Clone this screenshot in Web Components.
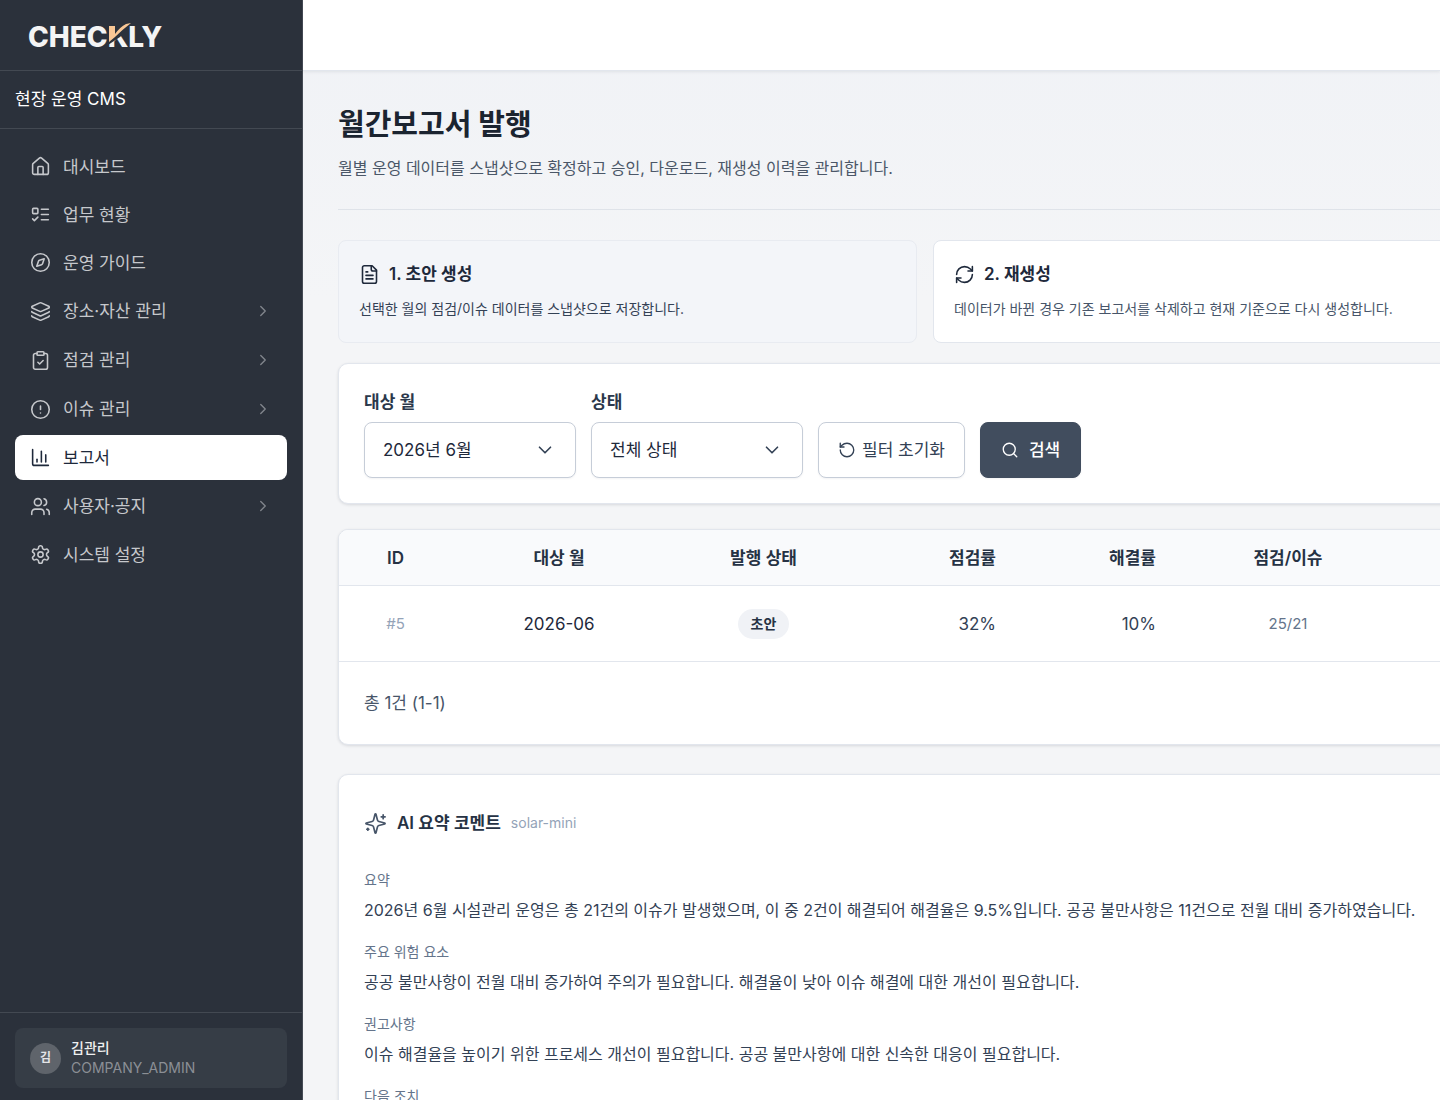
<!DOCTYPE html>
<html lang="ko">
<head>
<meta charset="UTF-8">
<meta name="viewport" content="width=device-width, initial-scale=1.0">
<title>월간보고서 발행</title>
<style>
  body {
    margin: 0;
    font-family: Inter, "Noto Sans CJK KR", sans-serif;
    font-size: 17px;
    line-height: 26px;
    color: #1e293b;
    overflow: hidden;
    --line: #e2e6ed;
    --shadow: 0 1px 3px rgba(15, 23, 42, 0.12);
  }
</style>
</head>
<body>

<app-shell>
  <app-sidebar slot="sidebar">
    <nav-item icon="house">대시보드</nav-item>
    <nav-item icon="list">업무 현황</nav-item>
    <nav-item icon="compass">운영 가이드</nav-item>
    <nav-item icon="layers" group>장소·자산 관리</nav-item>
    <nav-item icon="clipboard" group>점검 관리</nav-item>
    <nav-item icon="alert" group>이슈 관리</nav-item>
    <nav-item icon="chart" active>보고서</nav-item>
    <nav-item icon="users" group>사용자·공지</nav-item>
    <nav-item icon="settings">시스템 설정</nav-item>
    <user-chip slot="user" initial="김">
      <span slot="name">김관리</span>
      <span slot="role">COMPANY_ADMIN</span>
    </user-chip>
  </app-sidebar>

  <page-heading>
    <span slot="title">월간보고서 발행</span>
    월별 운영 데이터를 스냅샷으로 확정하고 승인, 다운로드, 재생성 이력을 관리합니다.
  </page-heading>

  <step-list>
    <step-card icon="file" current>
      <span slot="title">1. 초안 생성</span>
      선택한 월의 점검/이슈 데이터를 스냅샷으로 저장합니다.
    </step-card>
    <step-card icon="refresh">
      <span slot="title">2. 재생성</span>
      데이터가 바뀐 경우 기존 보고서를 삭제하고 현재 기준으로 다시 생성합니다.
    </step-card>
  </step-list>

  <filter-bar></filter-bar>
  <report-table></report-table>

  <ai-comment model="solar-mini">
    <comment-block label="요약">2026년 6월 시설관리 운영은 총 21건의 이슈가 발생했으며, 이 중 2건이 해결되어 해결율은 9.5%입니다. 공공 불만사항은 11건으로 전월 대비 증가하였습니다.</comment-block>
    <comment-block label="주요 위험 요소">공공 불만사항이 전월 대비 증가하여 주의가 필요합니다. 해결율이 낮아 이슈 해결에 대한 개선이 필요합니다.</comment-block>
    <comment-block label="권고사항">이슈 해결율을 높이기 위한 프로세스 개선이 필요합니다. 공공 불만사항에 대한 신속한 대응이 필요합니다.</comment-block>
    <comment-block label="다음 조치"></comment-block>
  </ai-comment>
</app-shell>

<script>
const icons = {
  house: '<path d="M15 21v-8a1 1 0 0 0-1-1h-4a1 1 0 0 0-1 1v8"/><path d="M3 10a2 2 0 0 1 .709-1.528l7-5.999a2 2 0 0 1 2.582 0l7 5.999A2 2 0 0 1 21 10v9a2 2 0 0 1-2 2H5a2 2 0 0 1-2-2z"/>',
  list: '<rect x="3" y="5" width="6" height="6" rx="1"/><path d="m3 17 2 2 4-4"/><path d="M13 6h8"/><path d="M13 12h8"/><path d="M13 18h8"/>',
  compass: '<path d="m16.24 7.76-1.804 5.411a2 2 0 0 1-1.265 1.265L7.76 16.24l1.804-5.411a2 2 0 0 1 1.265-1.265z"/><circle cx="12" cy="12" r="10"/>',
  layers: '<path d="M12.83 2.18a2 2 0 0 0-1.66 0L2.6 6.08a1 1 0 0 0 0 1.83l8.58 3.91a2 2 0 0 0 1.66 0l8.58-3.9a1 1 0 0 0 0-1.83z"/><path d="M2 12a1 1 0 0 0 .58.91l8.6 3.91a2 2 0 0 0 1.65 0l8.58-3.9A1 1 0 0 0 22 12"/><path d="M2 17a1 1 0 0 0 .58.91l8.6 3.91a2 2 0 0 0 1.65 0l8.58-3.9A1 1 0 0 0 22 17"/>',
  clipboard: '<rect x="8" y="2" width="8" height="4" rx="1"/><path d="M16 4h2a2 2 0 0 1 2 2v14a2 2 0 0 1-2 2H6a2 2 0 0 1-2-2V6a2 2 0 0 1 2-2h2"/><path d="m9 14 2 2 4-4"/>',
  alert: '<circle cx="12" cy="12" r="10"/><path d="M12 8v4"/><path d="M12 16h.01"/>',
  chart: '<path d="M3 3v16a2 2 0 0 0 2 2h16"/><path d="M18 17V9"/><path d="M13 17V5"/><path d="M8 17v-3"/>',
  users: '<path d="M16 21v-2a4 4 0 0 0-4-4H6a4 4 0 0 0-4 4v2"/><circle cx="9" cy="7" r="4"/><path d="M22 21v-2a4 4 0 0 0-3-3.87"/><path d="M16 3.13a4 4 0 0 1 0 7.75"/>',
  settings: '<path d="M12.22 2h-.44a2 2 0 0 0-2 2v.18a2 2 0 0 1-1 1.73l-.43.25a2 2 0 0 1-2 0l-.15-.08a2 2 0 0 0-2.73.73l-.22.38a2 2 0 0 0 .73 2.73l.15.1a2 2 0 0 1 1 1.72v.51a2 2 0 0 1-1 1.74l-.15.09a2 2 0 0 0-.73 2.73l.22.38a2 2 0 0 0 2.73.73l.15-.08a2 2 0 0 1 2 0l.43.25a2 2 0 0 1 1 1.73V20a2 2 0 0 0 2 2h.44a2 2 0 0 0 2-2v-.18a2 2 0 0 1 1-1.73l.43-.25a2 2 0 0 1 2 0l.15.08a2 2 0 0 0 2.73-.73l.22-.39a2 2 0 0 0-.73-2.73l-.15-.08a2 2 0 0 1-1-1.74v-.5a2 2 0 0 1 1-1.74l.15-.09a2 2 0 0 0 .73-2.73l-.22-.38a2 2 0 0 0-2.73-.73l-.15.08a2 2 0 0 1-2 0l-.43-.25a2 2 0 0 1-1-1.73V4a2 2 0 0 0-2-2z"/><circle cx="12" cy="12" r="3"/>',
  file: '<path d="M15 2H6a2 2 0 0 0-2 2v16a2 2 0 0 0 2 2h12a2 2 0 0 0 2-2V7Z"/><path d="M14 2v4a2 2 0 0 0 2 2h4"/><path d="M10 9H8"/><path d="M16 13H8"/><path d="M16 17H8"/>',
  refresh: '<path d="M3 12a9 9 0 0 1 9-9 9.75 9.75 0 0 1 6.74 2.74L21 8"/><path d="M21 3v5h-5"/><path d="M21 12a9 9 0 0 1-9 9 9.75 9.75 0 0 1-6.74-2.74L3 16"/><path d="M8 16H3v5"/>',
  reset: '<path d="M3 12a9 9 0 1 0 9-9 9.75 9.75 0 0 0-6.74 2.74L3 8"/><path d="M3 3v5h5"/>',
  search: '<circle cx="11" cy="11" r="8"/><path d="m21 21-4.3-4.3"/>',
  sparkles: '<path d="M9.937 15.5A2 2 0 0 0 8.5 14.063l-6.135-1.582a.5.5 0 0 1 0-.962L8.5 9.936A2 2 0 0 0 9.937 8.5l1.582-6.135a.5.5 0 0 1 .963 0L14.063 8.5A2 2 0 0 0 15.5 9.937l6.135 1.581a.5.5 0 0 1 0 .964L15.5 14.063a2 2 0 0 0-1.437 1.437l-1.582 6.135a.5.5 0 0 1-.963 0z"/><path d="M20 3v4"/><path d="M22 5h-4"/><path d="M4 17v2"/><path d="M5 18H3"/>',
  right: '<path d="m9 18 6-6-6-6"/>',
  down: '<path d="m6 9 6 6 6-6"/>'
};

// every element renders its markup into an open shadow root
class BaseElement extends HTMLElement {
  connectedCallback() {
    if (this.shadowRoot) return;
    this.attachShadow({ mode: 'open' }).innerHTML = this.render();
  }
}

class UiIcon extends BaseElement {
  render() {
    return `
      <style>
        :host { display: block; flex: none; width: 21px; height: 21px; }
        svg { display: block; width: 100%; height: 100%; }
      </style>
      <svg viewBox="0 0 24 24" fill="none" stroke="currentColor" stroke-width="1.8"
        stroke-linecap="round" stroke-linejoin="round" aria-hidden="true">
        ${icons[this.getAttribute('name')]}
      </svg>`;
  }
}

class AppShell extends BaseElement {
  render() {
    return `
      <style>
        :host { display: grid; grid-template-columns: 303px minmax(0, 1fr); height: 100vh; }
        .page { display: flex; flex-direction: column; min-height: 0; background: linear-gradient(#f0f2f6, #f4f5f7 300px); }
        header { flex: none; height: 70px; background: #fff; border-bottom: 1px solid var(--line); box-shadow: 0 1px 3px rgba(15, 23, 42, 0.08); }
        main { flex: 1; min-height: 0; overflow: auto; scrollbar-width: none; }
        .content { min-width: 1174px; padding: 34px 35px; }
      </style>
      <slot name="sidebar"></slot>
      <div class="page">
        <header></header>
        <main><div class="content"><slot></slot></div></main>
      </div>`;
  }
}

class AppSidebar extends BaseElement {
  render() {
    return `
      <style>
        :host { display: flex; flex-direction: column; background: #2b313b; border-right: 1px solid #454b55; color: #fff; }
        .logo { display: flex; align-items: center; box-sizing: border-box; height: 71px; padding: 3px 28px 0; border-bottom: 1px solid #434952; }
        .logo a { display: flex; color: #f4f4f4; font-size: 28px; line-height: 32px; font-weight: 800; text-decoration: none; }
        .k { position: relative; }
        .k svg { position: absolute; left: 0; top: 0; overflow: visible; }
        .name { padding: 15px; line-height: 27px; border-bottom: 1px solid #434952; }
        nav { flex: 1; display: flex; flex-direction: column; gap: 3px; padding: 15px; }
        footer { padding: 15px 15px 12px; border-top: 1px solid #434952; }
      </style>
      <div class="logo">
        <a href="#" aria-label="CHECKLY"><span>CHEC</span><span class="k">K<svg width="24" height="32" viewBox="0 0 24 32">
          <path fill="#2b313b" d="M0 4H20V8L12 16L0 24Z"/>
          <path fill="#f9c795" d="M1 5H7V13Q12 6 18 3L23 2Q14 9 7 16L1 21Z"/>
        </svg></span><span>LY</span></a>
      </div>
      <div class="name">현장 운영 CMS</div>
      <nav><slot></slot></nav>
      <footer><slot name="user"></slot></footer>`;
  }
}

class NavItem extends BaseElement {
  render() {
    const group = this.hasAttribute('group');
    return `
      <style>
        :host { display: block; color: #c6c8cc; }
        a { display: flex; align-items: center; gap: 12px; height: 45px; padding: 0 15px; border-radius: 8px; color: inherit; text-decoration: none; }
        a.group { height: 46px; }
        :host([active]) a { background: #fff; color: #1e293b; }
        span { flex: 1; }
        .arrow { width: 18px; height: 18px; color: #81858c; }
      </style>
      <a href="#" class="${group ? 'group' : ''}">
        <ui-icon name="${this.getAttribute('icon')}"></ui-icon>
        <span><slot></slot></span>
        ${group ? '<ui-icon class="arrow" name="right"></ui-icon>' : ''}
      </a>`;
  }
}

class UserChip extends BaseElement {
  render() {
    return `
      <style>
        :host { display: flex; align-items: center; gap: 10px; padding: 10px 15px; border-radius: 8px; background: #363d46; font-size: 14px; line-height: 20px; }
        .avatar { display: grid; place-items: center; width: 31px; height: 31px; border-radius: 50%; background: #5f646b; color: #e4e5e7; font-size: 12px; font-weight: 600; }
        .name { color: #eeeff0; font-weight: 500; }
        .role { color: #8b8f95; }
      </style>
      <div class="avatar">${this.getAttribute('initial')}</div>
      <div>
        <div class="name"><slot name="name"></slot></div>
        <div class="role"><slot name="role"></slot></div>
      </div>`;
  }
}

class PageHeading extends BaseElement {
  render() {
    return `
      <style>
        :host { display: block; padding-bottom: 28px; margin-bottom: 30px; border-bottom: 1px solid #dfe3e9; }
        h1 { margin: 0 0 10px; font-size: 29px; line-height: 40px; font-weight: 700; color: #1b2430; }
        p { margin: 0; font-size: 16px; color: #4b5768; }
      </style>
      <h1><slot name="title"></slot></h1>
      <p><slot></slot></p>`;
  }
}

class StepList extends BaseElement {
  render() {
    return `
      <style>
        :host { display: grid; grid-template-columns: 1fr 1fr; gap: 16px; margin-bottom: 20px; }
      </style>
      <slot></slot>`;
  }
}

class StepCard extends BaseElement {
  render() {
    return `
      <style>
        :host { display: block; padding: 20px 20px 21px; border: 1px solid var(--line); border-radius: 8px; background: #fff; color: #475569; }
        :host([current]) { background: #f3f5f9; border-color: #e8ebf1; color: #334155; }
        h2 { display: flex; align-items: center; gap: 9px; margin: 0 0 10px; font-size: 17px; line-height: 26px; font-weight: 600; color: #1e293b; }
        p { margin: 0; font-size: 14px; line-height: 24px; }
      </style>
      <h2><ui-icon name="${this.getAttribute('icon')}"></ui-icon><slot name="title"></slot></h2>
      <p><slot></slot></p>`;
  }
}

class FilterBar extends BaseElement {
  render() {
    return `
      <style>
        :host { display: flex; align-items: flex-end; gap: 15px; padding: 26px 25px 25px; margin-bottom: 25px; border: 1px solid var(--line); border-radius: 10px; background: #fff; box-shadow: var(--shadow); }
        .field { display: flex; flex-direction: column; gap: 8px; width: 212px; }
        label { line-height: 24px; font-weight: 600; color: #2b384b; }
        .select { display: grid; align-items: center; }
        .select > * { grid-area: 1 / 1; }
        .select ui-icon { justify-self: end; margin-right: 20px; color: #334155; pointer-events: none; width: 22px; height: 22px; }
        select, button { height: 56px; box-sizing: border-box; margin: 0; border: 1px solid #c6cdd8; border-radius: 8px; background: #fff; font: inherit; color: #1e293b; box-shadow: 0 1px 2px rgba(15, 23, 42, 0.05); }
        select { appearance: none; width: 100%; padding: 0 18px; }
        button { display: flex; align-items: center; gap: 6px; padding: 0 19px; color: #334155; }
        button ui-icon { width: 18px; height: 18px; }
        .search { gap: 10px; padding: 0 20px; background: #414d5e; border-color: #414d5e; color: #fff; font-weight: 500; }
      </style>
      <div class="field">
        <label for="month">대상 월</label>
        <div class="select"><select id="month"><option>2026년 6월</option></select><ui-icon name="down"></ui-icon></div>
      </div>
      <div class="field">
        <label for="status">상태</label>
        <div class="select"><select id="status"><option>전체 상태</option></select><ui-icon name="down"></ui-icon></div>
      </div>
      <button type="button"><ui-icon name="reset"></ui-icon>필터 초기화</button>
      <button type="submit" class="search"><ui-icon name="search"></ui-icon>검색</button>`;
  }
}

class ReportTable extends BaseElement {
  render() {
    return `
      <style>
        :host { display: block; margin-bottom: 29px; border: 1px solid var(--line); border-radius: 10px; background: #fff; box-shadow: var(--shadow); overflow: hidden; }
        table { width: 100%; table-layout: fixed; border-collapse: separate; border-spacing: 0; text-align: center; }
        th, td { padding: 0 25px; border-bottom: 1px solid var(--line); }
        th { height: 55px; background: #f9fafc; font-weight: 600; color: #263244; }
        td { height: 75px; color: #334155; }
        .id { width: 63px; }
        .month, .count { width: 164px; }
        .status { width: 145px; }
        .rate { width: 110px; text-align: right; }
        td.id, td.count { font-size: 15px; color: #64748b; }
        td.id { color: #94a3b8; }
        td.month { color: #1e293b; }
        .badge { display: inline-block; padding: 0 13px; border-radius: 15px; background: #f0f2f6; font-size: 14px; line-height: 30px; font-weight: 600; color: #263244; }
        footer { padding: 28px 25px; color: #475569; }
      </style>
      <table>
        <thead>
          <tr>
            <th class="id">ID</th><th class="month">대상 월</th><th class="status">발행 상태</th>
            <th class="rate">점검률</th><th class="rate">해결률</th><th class="count">점검/이슈</th><th></th>
          </tr>
        </thead>
        <tbody>
          <tr>
            <td class="id">#5</td><td class="month">2026-06</td><td class="status"><span class="badge">초안</span></td>
            <td class="rate">32%</td><td class="rate">10%</td><td class="count">25/21</td><td></td>
          </tr>
        </tbody>
      </table>
      <footer>총 1건 (1-1)</footer>`;
  }
}

class AiComment extends BaseElement {
  render() {
    return `
      <style>
        :host { display: block; padding: 25px; border: 1px solid var(--line); border-radius: 10px; background: #fff; box-shadow: var(--shadow); }
        header { display: flex; align-items: center; gap: 10px; height: 46px; margin-bottom: 23px; }
        ui-icon { width: 23px; height: 23px; color: #475569; }
        h2 { margin: 0; font-size: 17px; line-height: 26px; font-weight: 600; color: #263244; }
        small { font-size: 14px; color: #94a3b8; }
        .blocks { display: grid; gap: 16px; }
      </style>
      <header><ui-icon name="sparkles"></ui-icon><h2>AI 요약 코멘트</h2><small>${this.getAttribute('model')}</small></header>
      <div class="blocks"><slot></slot></div>`;
  }
}

class CommentBlock extends BaseElement {
  render() {
    return `
      <style>
        :host { display: block; }
        h3 { margin: 0 0 4px; font-size: 14px; line-height: 22px; font-weight: 400; color: #64748b; }
        p { margin: 0; font-size: 16px; line-height: 30px; color: #334155; white-space: nowrap; }
      </style>
      <h3>${this.getAttribute('label')}</h3>
      <p><slot></slot></p>`;
  }
}

customElements.define('ui-icon', UiIcon);
customElements.define('app-shell', AppShell);
customElements.define('app-sidebar', AppSidebar);
customElements.define('nav-item', NavItem);
customElements.define('user-chip', UserChip);
customElements.define('page-heading', PageHeading);
customElements.define('step-list', StepList);
customElements.define('step-card', StepCard);
customElements.define('filter-bar', FilterBar);
customElements.define('report-table', ReportTable);
customElements.define('ai-comment', AiComment);
customElements.define('comment-block', CommentBlock);
</script>
</body>
</html>
